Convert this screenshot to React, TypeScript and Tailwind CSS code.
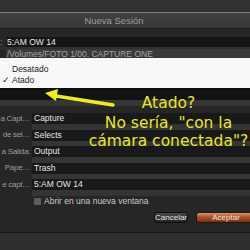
import React from 'react';

const rows = [
  { label: 'a Capt…', value: 'Capture' },
  { label: 'de sel…', value: 'Selects' },
  { label: 'a Salida:', value: 'Output' },
  { label: 'Pape…', value: 'Trash' },
  { label: 'e capt…', value: '5:AM OW 14' },
];

function FieldRow({ label, value }: { label: string; value: string }) {
  return (
    <div className="flex h-[16.5px]">
      <div className="flex h-[11px] w-[31px] shrink-0 items-center justify-end pr-[1px]">
        <span className="whitespace-nowrap text-[8px] tracking-[-0.3px] text-[#9c9c9c]">{label}</span>
      </div>
      <div className="ml-[1px] flex grow flex-col">
        <div className="flex h-[11px] items-center bg-[#191919] pl-[2px] text-[#e4e4e4]">{value}</div>
        <div className="h-[5.5px] bg-[#343434]" />
      </div>
    </div>
  );
}

export default function App() {
  return (
    <div
      className="relative h-[250px] w-[250px] overflow-hidden bg-[#2f2f2f] text-[8.5px] leading-none"
      style={{ fontFamily: '"Liberation Sans", Arial, sans-serif' }}
    >
      {/* window chrome */}
      <div className="h-[12px] bg-[#323232]" />
      <div className="h-[1px] bg-[#7e7e7e]" />
      <div className="flex h-[15px] items-center justify-center bg-[linear-gradient(#414141,#363636)] pr-[22px] text-[9.5px] text-[#9d9d9d]">
        Nueva Sesión
      </div>
      <div className="h-[1px] bg-[#1c1c1c]" />

      {/* panel */}
      <div className="flex flex-col bg-[#262626]">
        <div className="h-[8px]" />
        <div className="flex h-[10px] items-center">
          <span className="w-[6px] text-[#888]">:</span>
          <div className="flex h-full grow items-center bg-[#151515] pl-[1px] text-[#e8e8e8]">5:AM OW 14</div>
        </div>
        <div className="h-[2px] bg-[#303030]" />
        <div className="flex h-[10px] items-center pl-[6px]">
          <div className="flex h-full grow items-center bg-[#3a3a3a] pl-[1px] text-[#a5a5a5]">
            /Volumes/FOTO 1/00. CAPTURE ONE
          </div>
        </div>
        <div className="h-[29px]" />
        <div className="h-[12px] bg-[#131313]" />
        <div className="h-[6px] bg-[#363636]" />
        <div className="h-[7px]" />

        {rows.map((r) => (
          <FieldRow key={r.value + r.label} label={r.label} value={r.value} />
        ))}

        <div className="flex h-[11px] items-center pl-[34px]">
          <div className="h-[7px] w-[7px] rounded-[1px] bg-[#5d5d5d]" />
          <span className="ml-[3px] text-[#c9c9c9]">Abrir en una nueva ventana</span>
        </div>
        <div className="h-[5.5px]" />
        <div className="flex h-[11px] pl-[154px]">
          <div className="flex w-[54px] items-center justify-center rounded-[3px] border border-[#0e0e0e] bg-[linear-gradient(#474747,#242424)] text-[8px] text-[#e2e2e2]">
            Cancelar
          </div>
          <div className="ml-[8px] flex w-[60px] shrink-0 items-center justify-center rounded-[3px] border border-[#2a1408] bg-[linear-gradient(#d49a70,#a9532a_45%,#7e3210)] text-[8px] text-[#f3e4d6]">
            Aceptar
          </div>
        </div>
        <div className="h-[9px]" />
      </div>
      <div className="h-[1px] bg-[#181818]" />

      {/* popup menu */}
      <div className="absolute left-0 top-[58px] h-[30px] w-[250px] bg-[#f8f8f8] pt-[6px] text-[8.5px] text-[#222] shadow-[0_1px_2px_rgba(0,0,0,0.6)]">
        <div className="flex h-[11px] items-center pl-[12px]">Desatado</div>
        <div className="relative flex h-[11px] items-center pl-[12px]">
          <span className="absolute left-[2px]">✓</span>
          Atado
        </div>
      </div>

      {/* annotation arrow */}
      <svg className="absolute left-0 top-0" width="250" height="250" viewBox="0 0 250 250">
        <line x1="113" y1="105" x2="56" y2="96" stroke="#eeee1e" strokeWidth="3.5" strokeLinecap="round" />
        <polygon points="45,93 58,89 56,101" fill="#eeee1e" />
      </svg>

      {/* annotation text */}
      <div
        className="absolute left-[68px] top-[94px] w-[201px] text-center text-[15.5px] leading-[18px] text-[#e9e81c]"
        style={{ fontFamily: '"DejaVu Sans", sans-serif' }}
      >
        <div className="whitespace-nowrap">Atado?</div>
        <div className="mt-[2px] whitespace-nowrap">No sería, "con la</div>
        <div className="whitespace-nowrap">cámara conectada"?</div>
      </div>
    </div>
  );
}
